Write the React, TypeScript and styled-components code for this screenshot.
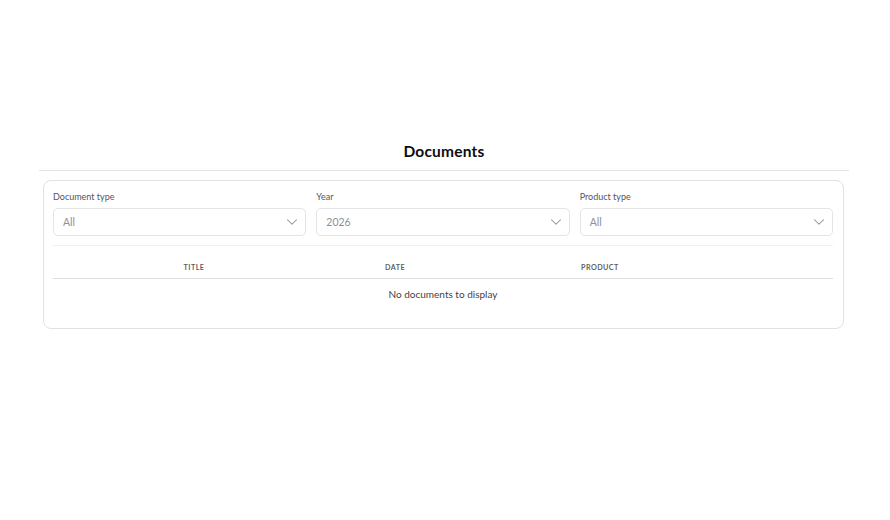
import styled, { createGlobalStyle } from "styled-components";
import { ChevronDown } from "lucide-react";

const GlobalStyle = createGlobalStyle`
  html, body {
    margin: 0;
    background: #fff;
    font-family: Lato, "Noto Sans", "Liberation Sans", sans-serif;
  }
`;

const Page = styled.main`
  width: 890px;
  height: 520px;
  box-sizing: border-box;
  padding: 142px 41px 0 39px;
`;

const Title = styled.h1`
  margin: 0;
  height: 28px;
  border-bottom: 1px solid #e4e4e6;
  font-size: 15.5px;
  line-height: 19px;
  font-weight: 700;
  letter-spacing: 0.2px;
  text-align: center;
  color: #0d0d0f;
`;

const Card = styled.section`
  margin: 9px 5px 0 4px;
  height: 149px;
  box-sizing: border-box;
  padding: 11px 10px 0 9px;
  border: 1px solid #e2e2e4;
  border-radius: 8px;
`;

const Filters = styled.div`
  display: grid;
  grid-template-columns: repeat(3, 1fr);
  column-gap: 10px;
  padding-bottom: 9px;
  border-bottom: 1px solid #f0f0f1;
`;

const Field = styled.div`
  display: flex;
  flex-direction: column;
  gap: 5px;
`;

const Label = styled.label`
  font-size: 9px;
  line-height: 10px;
  padding-bottom: 1px;
  color: #55555b;
`;

const Select = styled.div`
  height: 28px;
  box-sizing: border-box;
  padding: 0 4px 1px 9px;
  display: flex;
  align-items: center;
  justify-content: space-between;
  border: 1px solid #e4e4e6;
  border-radius: 5px;
  font-size: 10.5px;
  color: #8f8f94;

  svg {
    margin-top: 1px;
  }
`;

const HeaderRow = styled.div`
  display: grid;
  grid-template-columns: 282px 196px 1fr;
  height: 33px;
  box-sizing: border-box;
  padding-top: 16px;
  border-bottom: 1px solid #dfdfe1;
`;

const HeaderCell = styled.div<{ $center?: boolean }>`
  font-size: 7.2px;
  line-height: 11px;
  font-weight: 700;
  letter-spacing: 0.45px;
  color: #5f5f65;
  text-align: ${(p) => (p.$center ? "center" : "left")};
  padding-left: ${(p) => (p.$center ? "0" : "50px")};
`;

const Empty = styled.p`
  margin: 9px 0 0;
  font-size: 10px;
  line-height: 13px;
  text-align: center;
  color: #3f3f45;
`;

const filters = [
  { label: "Document type", value: "All" },
  { label: "Year", value: "2026" },
  { label: "Product type", value: "All" },
];

export default function App() {
  return (
    <>
      <GlobalStyle />
      <Page>
        <Title>Documents</Title>
        <Card>
          <Filters>
            {filters.map((f) => (
              <Field key={f.label}>
                <Label>{f.label}</Label>
                <Select>
                  {f.value}
                  <ChevronDown size={18} color="#8f8f94" strokeWidth={1.4} />
                </Select>
              </Field>
            ))}
          </Filters>
          <HeaderRow>
            <HeaderCell $center>TITLE</HeaderCell>
            <HeaderCell>DATE</HeaderCell>
            <HeaderCell>PRODUCT</HeaderCell>
          </HeaderRow>
          <Empty>No documents to display</Empty>
        </Card>
      </Page>
    </>
  );
}
